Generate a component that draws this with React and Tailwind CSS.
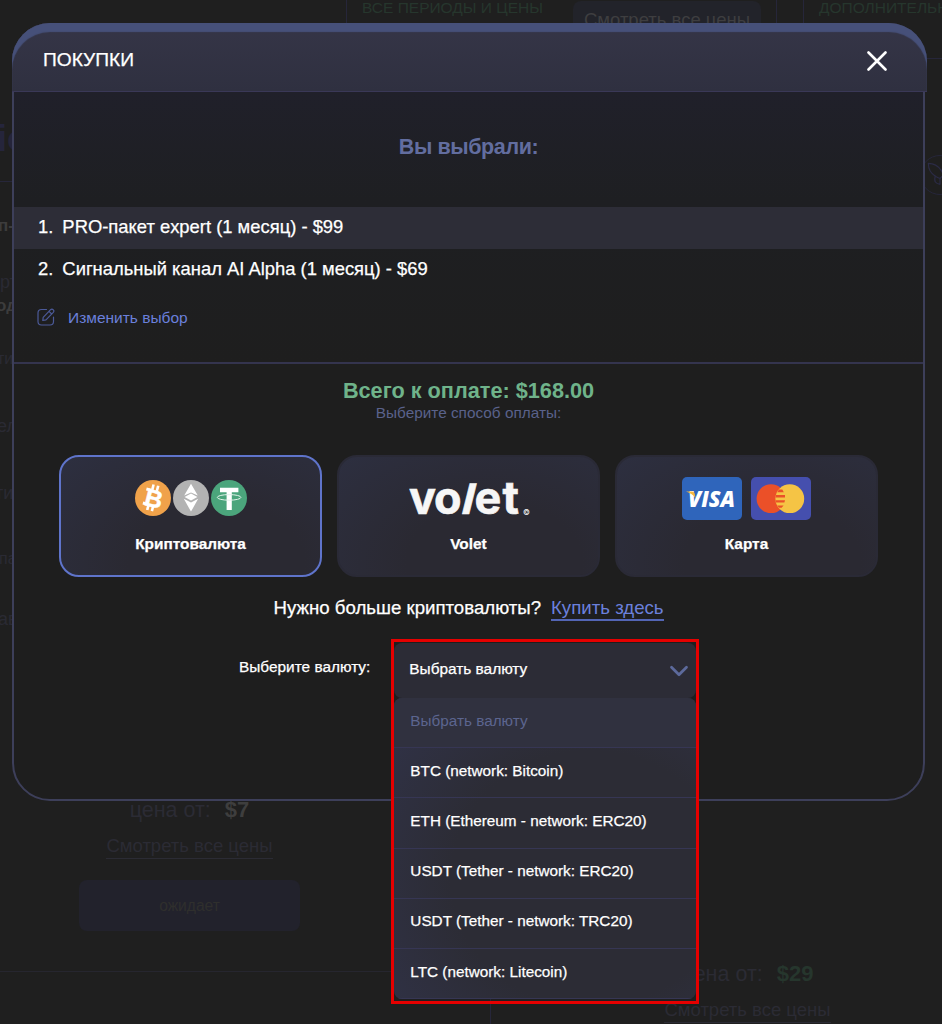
import { useState } from "react"
import { ChevronDown, Rocket } from "lucide-react";

const cart = [
  "PRO-пакет expert (1 месяц) - $99",
  "Сигнальный канал AI Alpha (1 месяц) - $69",
];

const currencies = [
  "BTC (network: Bitcoin)",
  "ETH (Ethereum - network: ERC20)",
  "USDT (Tether - network: ERC20)",
  "USDT (Tether - network: TRC20)",
  "LTC (network: Litecoin)",
];

const CryptoLogos = () => (
  <div className="flex gap-[2px]">
    <svg viewBox="0 0 36 36" className="size-9">
      <circle cx="18" cy="18" r="18" fill="#f0a24a" />
      <g transform="rotate(14 18 18)" fill="#fff">
        <rect x="14" y="4.8" width="2.6" height="5.5" />
        <rect x="18.8" y="4.8" width="2.6" height="5.5" />
        <rect x="14" y="25.5" width="2.6" height="5.5" />
        <rect x="18.8" y="25.5" width="2.6" height="5.5" />
        <rect x="9.4" y="9.3" width="5" height="3" />
        <rect x="9.4" y="23.8" width="5" height="3" />
        <text x="10.2" y="26.8" fontSize="24.5" fontWeight="700" stroke="#fff" strokeWidth="0.5">B</text>
      </g>
    </svg>
    <svg viewBox="0 0 36 36" className="size-9">
      <circle cx="18" cy="18" r="18" fill="#b3b3b3" />
      <path d="M18 3.8 L11.2 15.4 L18 12.4 L24.8 15.4 Z" fill="#fff" />
      <path d="M18 13.6 L11.6 17 L18 20.4 L24.4 17 Z" fill="#fff" />
      <path d="M10.8 18.8 L18 22.6 L25.2 18.8 L18 31.6 Z" fill="#fff" />
    </svg>
    <svg viewBox="0 0 36 36" className="size-9">
      <circle cx="18" cy="18" r="18" fill="#4ba57c" />
      <path d="M9 7.8 H27.4 V12.2 H20.8 V30 H15.6 V12.2 H9 Z" fill="#fff" />
      <ellipse cx="18.1" cy="17.4" rx="11.8" ry="2.8" fill="none" stroke="#e4f3ec" strokeWidth="1" />
    </svg>
  </div>
);

const VoletLogo = () => (
  <svg viewBox="0 0 122 40" className="h-10 w-[122px] overflow-visible" fill="#f6f6f6" fontFamily="Inter, sans-serif" fontWeight="700">
    <g stroke="#f6f6f6" strokeWidth="0.6" fontSize="45">
      <text x="1" y="36">v</text>
      <text x="26" y="36">o</text>
      <text transform="translate(51.5 36) skewX(-14) scale(1 0.93)">l</text>
      <text x="66.5" y="36">e</text>
      <text x="94.5" y="36">t</text>
    </g>
    <text x="115" y="36.5" fontSize="7.5" fontWeight="500">©</text>
  </svg>
);

const CardLogos = () => (
  <div className="flex gap-[9px]">
    <svg viewBox="0 0 60 43" className="h-[43px] w-[60px]">
      <rect width="60" height="43" rx="5" fill="#2f65bb" />
      <text x="6" y="30" fontSize="22" fontWeight="800" fontStyle="italic" fontFamily="Open Sans, sans-serif" fill="#fff" textLength="47" lengthAdjust="spacingAndGlyphs">VISA</text>
      <path d="M4 14.5 H10 Q12 14.6 12.6 16.5 L13.6 21 Q10.5 16.5 4 14.5 Z" fill="#f5b93f" />
    </svg>
    <svg viewBox="0 0 60 43" className="h-[43px] w-[60px]">
      <rect width="60" height="43" rx="5" fill="#454fae" />
      <circle cx="20" cy="21.7" r="14.4" fill="#eb5028" />
      <circle cx="38.8" cy="21.7" r="14.4" fill="#f5c445" />
      <path d="M28 12.6 H31.3 L32.8 15.2 H26.2 Z M25 18 H34 V20.4 H24.5 Z M24.5 23.2 H34 L33.4 25.6 H25 Z M26.2 28.4 H32.6 L30.6 30.8 H28 Z" fill="#eb5028" />
    </svg>
  </div>
);

const methods = [
  { id: "crypto", label: "Криптовалюта", Logo: CryptoLogos },
  { id: "volet", label: "Volet", Logo: VoletLogo },
  { id: "card", label: "Карта", Logo: CardLogos },
];

// Dimmed pricing page that stays behind the modal
const PricingBackdrop = () => (
  <div className="absolute inset-0 flex flex-col overflow-hidden whitespace-nowrap bg-[#1f1f1f]">
    <div className="flex h-[59px] shrink-0">
      <div className="ml-[346px] flex w-[431px] shrink-0 justify-between border-x border-[#26263a] pr-[15px] pl-[15px]">
        <p className="mt-[-2px] text-[15.5px] leading-5 text-[#26362d]">ВСЕ ПЕРИОДЫ И ЦЕНЫ</p>
        <div className="mt-px h-10 w-[188px] rounded-lg bg-[#22232a] pt-[7px] text-center text-[18.5px] leading-6 text-[#3e3e40]">Смотреть все цены</div>
      </div>
      <div className="ml-[26px] flex-1 border-b border-l border-[#26263a] pl-[15px]">
        <p className="mt-[-2px] text-[15.5px] leading-5 text-[#26362d]">ДОПОЛНИТЕЛЬНО</p>
      </div>
    </div>
    <div className="flex h-[737px] shrink-0 justify-between">
      <div className="w-[30px] text-[18px] leading-6 text-[#2a2a33]">
        <p className="mt-[62px] -ml-[3px] h-[61px] border-b border-[#26263a] text-[36px] leading-9 font-bold text-[#25253b]">io</p>
        <p className="mt-[32px] -ml-[2px] text-[17px] font-bold text-[#3c3c3c]">п-</p>
        <p className="mt-[32px]">рт</p>
        <p className="-ml-[4px] text-[17px] font-bold text-[#3c3c3c]">од</p>
        <p className="mt-[29px] -ml-[3px] text-[16px]">ти</p>
        <p className="mt-[43px] -ml-[3px]">ел</p>
        <p className="mt-[43px] -ml-[5px]">ти</p>
        <p className="mt-[42px] -ml-px text-[16px]">па</p>
        <p className="mt-[36px] -ml-[2px]">ав</p>
      </div>
      <div className="-mr-[18px] mt-[96px] flex size-10 items-center justify-center rounded-full border border-[#26263a]">
        <Rocket className="size-7 -rotate-90 text-[#2b2b45]" strokeWidth={1} />
      </div>
    </div>
    <div className="flex flex-1">
      <div className="h-[176px] w-[490px] border-b border-[#26262f] pl-[79px]">
        <div className="flex w-[221px] flex-col items-center">
          <p className="text-[21.5px] leading-7 text-[#2b2b34]">цена от: <b className="ml-2 text-[22px] text-[#3e3e3e]">$7</b></p>
          <p className="mt-[10px] border-b border-[#2b2b34] text-[18.5px] leading-6 text-[#2b2b34]">Смотреть все цены</p>
          <div className="mt-[21px] h-[51px] w-full rounded-lg bg-[#22222c] text-center text-[15.6px] leading-[51px] text-[#2f2f2d]">ожидает</div>
        </div>
      </div>
      <div className="mt-[164px] flex-1 border-l border-[#26263a]">
        <div className="ml-[173px] flex w-[167px] flex-col items-center">
          <p className="text-[21.5px] leading-7 text-[#2b2b34]">цена от: <b className="ml-2 text-[22px] text-[#26362d]">$29</b></p>
          <p className="mt-[10px] border-b border-[#2b2b34] text-[18.5px] leading-6 text-[#2b2b34]">Смотреть все цены</p>
        </div>
      </div>
    </div>
  </div>
);

function CurrencySelect() {
  const [selected, setSelected] = useState("Выбрать валюту");
  const [open, setOpen] = useState(true);

  const pick = (name) => {
    setSelected(name);
    setOpen(false);
  };

  return (
    <div className="relative w-[302px]">
      <button
        onClick={() => setOpen(!open)}
        className="flex h-[55px] w-full items-center justify-between rounded-lg bg-[#2c2c36] pr-[2px] pb-1 pl-[15px] text-[15.4px] text-white [-webkit-text-stroke:0.25px]"
      >
        {selected}
        <ChevronDown className="mt-1 size-[30px] text-[#5d6a9c]" strokeWidth={2.2} />
      </button>
      {open && (
        <>
          <ul className="absolute top-[55px] left-0 z-10 w-full overflow-hidden rounded-lg bg-radial-[at_65%_60%] from-[#2c2c35] from-50% to-[#31334a] text-[15.3px] text-white">
            <li className="flex h-[50.2px] items-center border-b border-[#363654] bg-[#30313f] pb-[3px] pl-4 text-[#5c658f]">Выбрать валюту</li>
            {currencies.map((name) => (
              <li
                key={name}
                onClick={() => pick(name)}
                className="flex h-[50.2px] items-center border-b border-[#363654] pb-[3px] pl-4 [-webkit-text-stroke:0.25px]"
              >
                {name}
              </li>
            ))}
          </ul>
          <div className="pointer-events-none absolute -top-1 -left-[3px] z-20 h-[365px] w-[308px] border-3 border-[#e60000]" />
        </>
      )}
    </div>
  );
}

export default function App() {
  const [method, setMethod] = useState("crypto");

  return (
    <div className="relative h-[1024px] w-[942px] overflow-hidden font-['Liberation_Sans',Arial,sans-serif]">
      <PricingBackdrop />

      <div className="relative mt-[23px] ml-3 h-[778px] w-[913px] rounded-[38px] bg-[#1e1e1e]">
        <div className="flex h-full flex-col rounded-[38px] border-2 border-[#3d3f5a]">
          <header className="-mt-[2px] -mr-[4px] -ml-[2px] flex h-[69px] shrink-0 items-center justify-between rounded-t-[38px] border-b border-[#3a3857] bg-linear-to-b from-[#353547] to-[#2f3040] pt-[5px] pr-10 pl-[31px] shadow-[inset_0_9px_1px_#465079]">
            <h1 className="pt-px text-[19.2px] text-white [-webkit-text-stroke:0.25px]">ПОКУПКИ</h1>
            <svg viewBox="0 0 20 20" className="mt-[3px] size-5" stroke="#fff" strokeWidth="2.6" strokeLinecap="round">
              <path d="M1.5 1.5 L18.5 18.5 M18.5 1.5 L1.5 18.5" />
            </svg>
          </header>

          <section className="h-[272px] shrink-0 border-b-2 border-[#34344e] bg-linear-to-b from-[#20202a] via-[#1e1f22] via-40% to-[#1e1e1e]">
            <h2 className="h-[115px] pt-[41px] text-center text-[21.5px] leading-7 font-bold tracking-[-0.4px] text-[#626d9f]">Вы выбрали:</h2>
            <ol className="text-[18.4px] text-white [-webkit-text-stroke:0.25px]">
              {cart.map((item, i) => (
                <li key={item} className="flex h-[42px] items-center gap-[9px] pb-[3px] pl-6 odd:bg-[#2d2d37]">
                  <span>{i + 1}.</span>
                  {item}
                </li>
              ))}
            </ol>
            <a className="mt-[15px] ml-[23px] flex items-center gap-[13px] text-[15.5px] text-[#6b80dc]">
              <svg viewBox="0 0 18 18" className="-mt-[2px] size-[18px]" fill="none" stroke="#4c5a99" strokeWidth="1.2" strokeLinecap="round" strokeLinejoin="round">
                <path d="M9.5 1.5 H4.5 Q1 1.5 1 5 V13.5 Q1 17 4.5 17 H13 Q16.5 17 16.5 13.5 V9" />
                <path d="M6.2 9.3 L13.6 1.7 Q15 .5 16.3 1.8 Q17.5 3.1 16.3 4.4 L9 11.8 L5.8 12.5 Z M12 3.4 L14.7 6" />
              </svg>
              Изменить выбор
            </a>
          </section>

          <section className="flex flex-col items-center">
            <p className="mt-[13px] text-[21.7px] leading-7 font-bold text-[#6fb38a]">Всего к оплате: $168.00</p>
            <p className="text-[15.35px] leading-4 text-[#5a628b]">Выберите способ оплаты:</p>

            <div className="mt-[34px] grid w-[819px] grid-cols-3 gap-[15px]">
              {methods.map(({ id, label, Logo }) => (
                <button
                  key={id}
                  onClick={() => setMethod(id)}
                  className={`flex h-[122px] flex-col items-center rounded-[20px] border-2 bg-radial-[at_60%_90%] from-[#2a2932] from-40% to-[#2d2f40] ${
                    method === id ? "border-[#5f74cb]" : "border-[#2a2a36]"
                  }`}
                >
                  <div className="mt-[18px] flex h-[46px] items-center">
                    <Logo />
                  </div>
                  <span className="mt-[13px] text-[15.4px] leading-5 font-bold text-white [-webkit-text-stroke:0.25px]">{label}</span>
                </button>
              ))}
            </div>

            <p className="mt-[19px] flex gap-[10px] text-[18.65px] leading-[23px] text-white">
              <span className="[-webkit-text-stroke:0.25px]">Нужно больше криптовалюты?</span>
              <a className="border-b-2 border-[#5365b4] text-[#6b80dc]">Купить здесь</a>
            </p>

            <div className="mt-[22px] flex gap-[24px] self-start pl-[225px]">
              <span className="pt-3 text-[15.4px] leading-6 text-white [-webkit-text-stroke:0.25px]">Выберите валюту:</span>
              <CurrencySelect />
            </div>
          </section>
        </div>
      </div>
    </div>
  );
}
